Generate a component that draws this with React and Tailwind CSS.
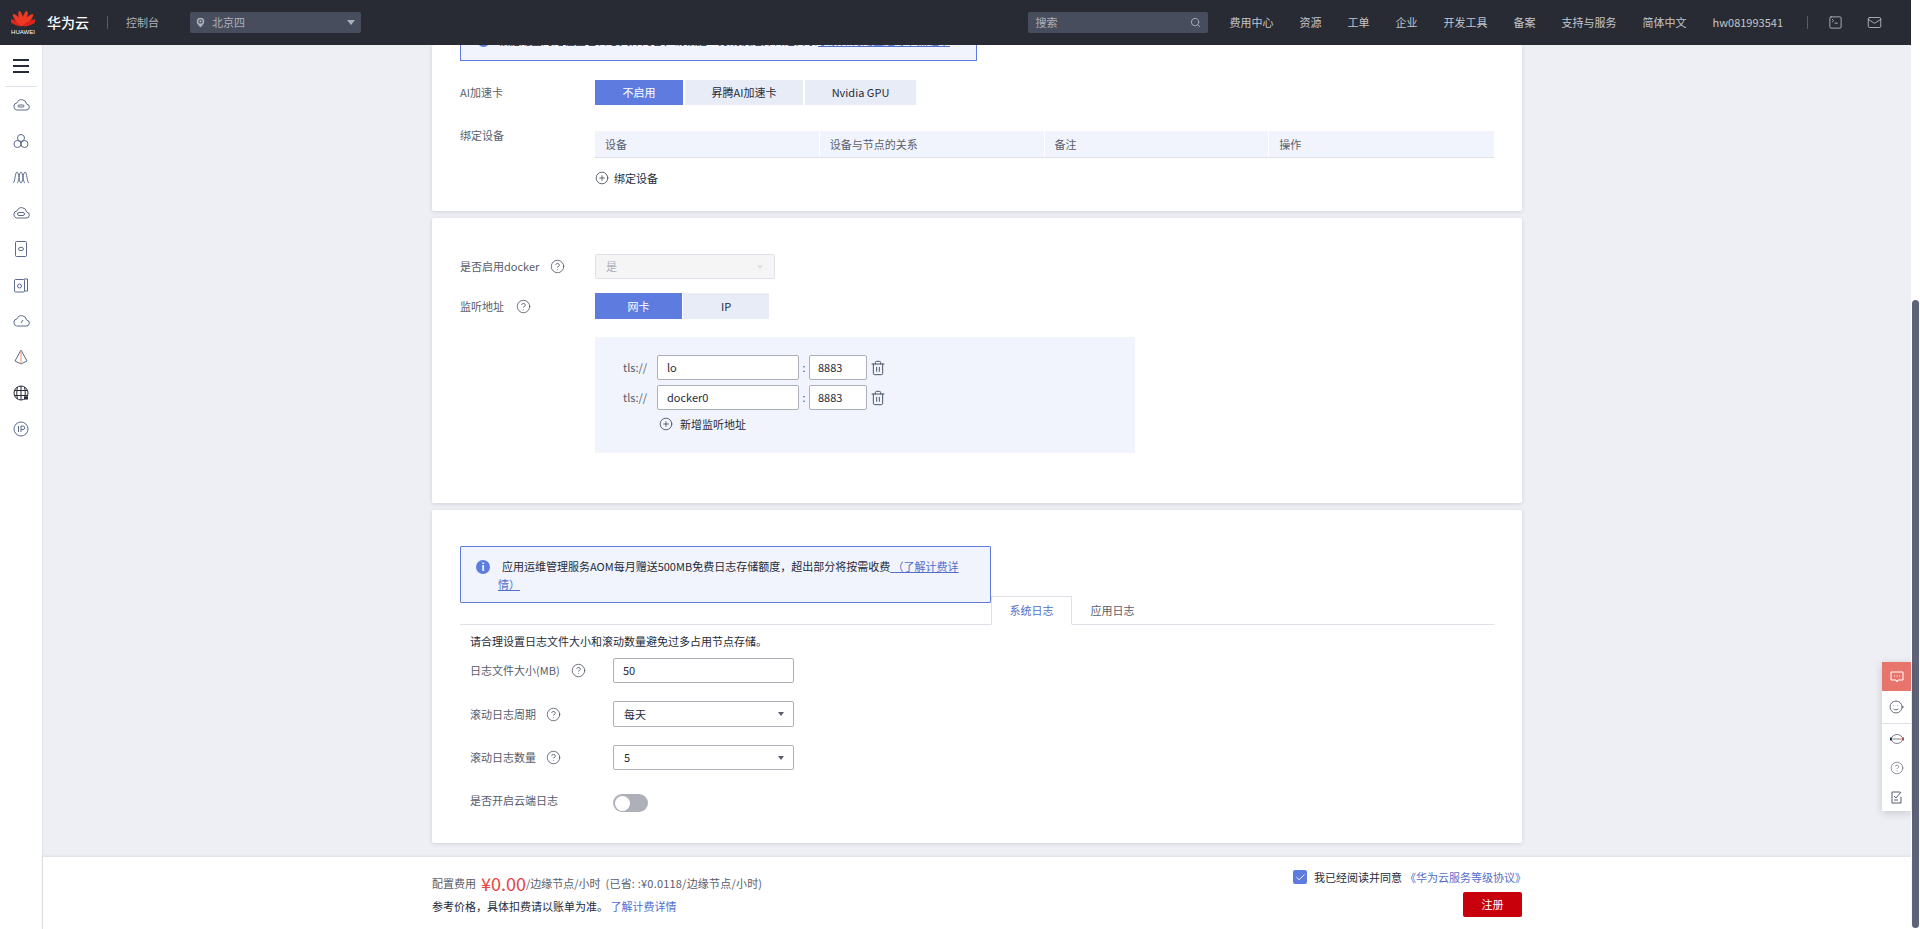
import React from 'react';
import { CircleHelp, CirclePlus, Trash2, Search, MapPin, Mail, SquareTerminal, Check } from 'lucide-react';

const navItems = ['费用中心', '资源', '工单', '企业', '开发工具', '备案', '支持与服务', '简体中文', 'hw081993541'];

function Caret({ className = '' }) {
  return <span className={`w-0 h-0 border-x-[3px] border-x-transparent border-t-[4px] ${className}`} />;
}

function Help() {
  return <CircleHelp className="w-[15px] h-[15px] text-[#4f5666]" strokeWidth={1.3} />;
}

function HuaweiLogo() {
  const petals = [-66, -40, -14, 14, 40, 66];
  return (
    <div className="flex flex-col items-center w-[24px]">
      <svg width="24" height="18" viewBox="-12 -18 24 18">
        {petals.map(a => (
          <ellipse key={a} cx="0" cy="-9" rx="2.2" ry="7.5" fill={Math.abs(a) > 50 ? '#d8261c' : '#ee3a24'} transform={`rotate(${a} 0 -1)`} />
        ))}
      </svg>
      <span className="text-[6px] leading-[8px] text-white font-['Liberation_Sans'] mt-px">HUAWEI</span>
    </div>
  );
}

function SideIcon({ children }) {
  return (
    <div className="h-[36px] flex items-center justify-center">
      <svg width="18" height="18" viewBox="0 0 18 18" fill="none" stroke="#5b6a8c" strokeWidth="1">
        {children}
      </svg>
    </div>
  );
}

const cloud = 'M4.5 14h9.5a3 3 0 0 0 .6-6 5 5 0 0 0-9.6-1.2A3.7 3.7 0 0 0 4.5 14z';

function Sidebar() {
  return (
    <aside className="w-[43px] shrink-0 bg-white border-r border-[#dfe1e8] flex flex-col items-center">
      <div className="w-full h-[41px] flex items-center justify-center">
        <div className="w-[16px] flex flex-col gap-[4px]">
          <span className="h-[2px] bg-[#252b3a]" />
          <span className="h-[2px] bg-[#252b3a]" />
          <span className="h-[2px] bg-[#252b3a]" />
        </div>
      </div>
      <div className="w-[32px] h-px bg-[#dfe1e8]" />
      <SideIcon><path d={cloud} /><rect x="6" y="9" width="6" height="2" rx="1" /></SideIcon>
      <SideIcon><circle cx="9" cy="6" r="3.5" /><circle cx="5.5" cy="12" r="3.5" /><circle cx="12.5" cy="12" r="3.5" /></SideIcon>
      <SideIcon><path d="M1 15C3 15 3 4 5 4S7 15 9 15M5 15C7 15 7 4 9 4S11 15 13 15M9 15C11 15 11 4 13 4S15 15 17 15" /></SideIcon>
      <SideIcon><path d={cloud} /><rect x="5.5" y="8.5" width="7" height="3" rx="1.5" /></SideIcon>
      <SideIcon><rect x="3.5" y="1.5" width="11" height="15" rx="1" /><ellipse cx="9" cy="9" rx="2.5" ry="1.7" /></SideIcon>
      <SideIcon><path d="M12 3h3.5v12H13" /><rect x="2.5" y="3.5" width="10" height="12.5" rx="1" /><circle cx="7.5" cy="10" r="2" /></SideIcon>
      <SideIcon><path d={cloud} /><path d="M9 11l2-3" /></SideIcon>
      <SideIcon><path d="M9 2L3 13l6 3 6-3z" /><path d="M9 2v14" stroke="#e8956b" /></SideIcon>
      <SideIcon><circle cx="9" cy="9" r="7" stroke="#252b3a" /><path d="M2 6.5h14M2 11.5h14M9 2v14M5.500 3c-1 4-1 8 0 12M12.500 3c1 4 1 8 0 12" stroke="#252b3a" /><rect x="12" y="12.500" width="4" height="3" fill="#252b3a" stroke="none" /></SideIcon>
      <SideIcon><circle cx="9" cy="9" r="7" /><path d="M6.500 6v6M9 12V6h2a1.500 1.500 0 0 1 0 3.500H9" /></SideIcon>
    </aside>
  );
}

function Segmented({ items, widths }) {
  return (
    <div className="flex gap-[2px]">
      {items.map((t, i) => (
        <div key={t} className={`h-[25px] flex items-center justify-center text-[11px] ${widths[i]} ${i === 0 ? 'bg-[#5e7ce0] text-white' : 'bg-[#e8ecf7] text-[#252b3a]'}`}>
          {t}
        </div>
      ))}
    </div>
  );
}

function Card({ className = '', children }) {
  return <section className={`bg-white rounded-[2px] shadow-[0_1px_4px_rgba(37,43,58,0.14)] ${className}`}>{children}</section>;
}

function Input({ value, className = '' }) {
  return <div className={`h-[25px] border border-[#adb0b8] rounded-[2px] bg-white flex items-center text-[11px] text-[#252b3a] ${className}`}>{value}</div>;
}

function Select({ value, className = 'h-[25px]' }) {
  return (
    <div className={`w-[181px] border border-[#adb0b8] rounded-[2px] bg-white flex items-center justify-between pl-[10px] pr-[9px] text-[11px] text-[#252b3a] ${className}`}>
      {value}
      <Caret className="border-t-[#575d6c]" />
    </div>
  );
}

function ListenRow({ name }) {
  return (
    <div className="flex items-center h-[25px]">
      <span className="w-[62px] pl-[28px] text-[11px] text-[#575d6c]">tls://</span>
      <Input value={name} className="w-[142px] pl-[9px]" />
      <span className="w-[10px] text-center text-[11px] text-[#575d6c]">:</span>
      <Input value="8883" className="w-[58px] pl-[8px]" />
      <Trash2 className="w-[16px] h-[16px] ml-[3px] text-[#4f5666]" strokeWidth={1.5} />
    </div>
  );
}

function LogRow({ label, gap = 'gap-[10px]', children, className = '' }) {
  return (
    <div className={`flex items-center ${className}`}>
      <div className={`w-[153px] pl-[10px] flex items-center text-[11px] text-[#575d6c] ${gap}`}>
        <span>{label}</span>
        <Help />
      </div>
      {children}
    </div>
  );
}

export default function App() {
  return (
    <div className="relative h-[929px] w-[1920px] overflow-hidden flex flex-col bg-white font-['Noto_Sans_CJK_SC','Noto_Sans',sans-serif]">
      <header className="relative z-10 h-[45px] shrink-0 bg-[#282b33] flex items-center pl-[11px] pr-[29px] mr-[9px]">
        <HuaweiLogo />
        <span className="ml-[12px] text-[14px] font-medium text-white">华为云</span>
        <span className="ml-[18px] w-px h-[13px] bg-[#575d6c]" />
        <span className="ml-[18px] text-[11px] text-[#adb0b8]">控制台</span>
        <div className="ml-[31px] w-[171px] h-[21px] rounded-[2px] bg-[#474d5c] flex items-center pl-[4px] pr-[6px] text-[11px] text-[#adb0b8]">
          <MapPin className="w-[13px] h-[13px] fill-[#adb0b8] text-[#474d5c]" />
          <span className="ml-[5px] flex-1">北京四</span>
          <Caret className="border-t-[#adb0b8] border-x-[4px] border-t-[5px]" />
        </div>
        <div className="ml-auto w-[180px] h-[21px] rounded-[2px] bg-[#474d5c] flex items-center justify-between pl-[8px] pr-[7px] text-[11px] text-[#adb0b8]">
          搜索
          <Search className="w-[11px] h-[11px]" />
        </div>
        <nav className="ml-[22px] flex items-center gap-[26px] text-[11px] text-[#c3c6cd]">
          {navItems.map(t => <span key={t}>{t}</span>)}
        </nav>
        <span className="ml-[24px] w-px h-[13px] bg-[#575d6c]" />
        <SquareTerminal className="ml-[20px] w-[15px] h-[15px] text-[#c3c6cd]" strokeWidth={1.3} />
        <Mail className="ml-[24px] w-[15px] h-[15px] text-[#c3c6cd]" strokeWidth={1.3} />
      </header>

      <div className="flex-1 min-h-0 flex mr-[9px] bg-[#eeeff4]">
        <Sidebar />
        <div className="flex-1 min-w-0 flex flex-col">
          <main className="flex-1 min-h-0 overflow-hidden pl-[389px]">
            <div className="w-[1090px] flex flex-col gap-[7px]">
              <Card className="h-[166px] px-[28px]">
                {/* scrolled under the header, only the lower edge of this notice shows */}
                <div className="-mt-[30px] h-[46px] w-[517px] border border-[#5e7ce0] bg-[#f1f4fc] pl-[16px] pt-[16px] flex items-start gap-[8px] text-[11px] text-[#252b3a]">
                  <span className="mt-[2px] w-[13px] h-[13px] shrink-0 rounded-full bg-[#5e7ce0]" />
                  <span>根据配置的路径查看日志文件内容，请根据业务规模选择合适目录<a className="ml-[1px] text-[#526ecc] underline">了解如何配置边缘节点证书</a></span>
                </div>
                <div className="mt-[19px] flex">
                  <span className="w-[135px] leading-[25px] text-[11px] text-[#575d6c]">AI加速卡</span>
                  <Segmented items={['不启用', '昇腾AI加速卡', 'Nvidia GPU']} widths={['w-[88px]', 'w-[118px]', 'w-[111px]']} />
                </div>
                <div className="mt-[22px] flex">
                  <span className="w-[135px] text-[11px] text-[#575d6c]">绑定设备</span>
                  <div className="flex-1 mt-[4px]">
                    <div className="h-[27px] grid grid-cols-4 bg-[#f1f4fc] border-b border-[#dfe1e8] text-[11px] text-[#575d6c] divide-x divide-white">
                      {['设备', '设备与节点的关系', '备注', '操作'].map(t => (
                        <span key={t} className="pl-[10px] leading-[26px]">{t}</span>
                      ))}
                    </div>
                    <div className="mt-[13px] flex items-center gap-[5px] h-[14px] text-[11px] text-[#252b3a]">
                      <CirclePlus className="w-[14px] h-[14px] text-[#252b3a]" strokeWidth={1.2} />
                      绑定设备
                    </div>
                  </div>
                </div>
              </Card>

              <Card className="h-[285px] px-[28px] pt-[36px]">
                <div className="flex items-center">
                  <div className="w-[135px] flex items-center gap-[11px] text-[11px] text-[#575d6c]">是否启用docker <Help /></div>
                  <div className="w-[180px] h-[25px] border border-[#dfe1e8] rounded-[2px] bg-[#f5f5f6] flex items-center justify-between pl-[10px] pr-[11px] text-[11px] text-[#adb0b8]">
                    是
                    <Caret className="border-t-[#dfe1e8]" />
                  </div>
                </div>
                <div className="mt-[14px] flex items-center">
                  <div className="w-[135px] flex items-center gap-[12px] text-[11px] text-[#575d6c]">监听地址 <Help /></div>
                  <div className="flex">
                    <div className="w-[87px] h-[26px] bg-[#5e7ce0] text-white text-[11px] flex items-center justify-center">网卡</div>
                    <div className="w-[86px] h-[26px] ml-px bg-[#e8ecf7] text-[#252b3a] text-[11px] flex items-center justify-center">IP</div>
                  </div>
                </div>
                <div className="mt-[18px] ml-[135px] w-[540px] h-[116px] bg-[#f1f4fc] pt-[18px]">
                  <div className="flex flex-col gap-[5px]">
                    <ListenRow name="lo" />
                    <ListenRow name="docker0" />
                  </div>
                  <div className="mt-[7px] ml-[64px] h-[14px] flex items-center gap-[7px] text-[11px] text-[#252b3a]">
                    <CirclePlus className="w-[14px] h-[14px]" strokeWidth={1.2} />
                    新增监听地址
                  </div>
                </div>
              </Card>

              <Card className="h-[333px] px-[28px] pt-[36px]">
                <div className="relative z-[1] w-[531px] h-[57px] border border-[#5e7ce0] rounded-[1px] bg-[#f1f4fc] pl-[15px] pr-[30px] pt-[10px] text-[11px] leading-[18px] text-[#252b3a] flex items-start gap-[8px]">
                  <span className="mt-[3px] w-[14px] h-[14px] shrink-0 rounded-full bg-[#5e7ce0] text-white text-[10px] font-bold leading-[14px] text-center">i</span>
                  <p className="indent-[4px]">
                    应用运维管理服务AOM每月赠送500MB免费日志存储额度，超出部分将按需收费
                    <a className="text-[#526ecc] underline"> （了解计费详情）</a>
                  </p>
                </div>
                <div className="-mt-[7px] flex items-end border-b border-[#dfe1e8] h-[29px]">
                  <div className="ml-[531px] w-[81px] h-[29px] -mb-px bg-white border border-b-white border-[#dfe1e8] flex items-center justify-center text-[11px] text-[#526ecc]">系统日志</div>
                  <div className="w-[81px] h-[28px] flex items-center justify-center text-[11px] text-[#575d6c]">应用日志</div>
                </div>
                <p className="mt-[8px] pl-[10px] text-[11px] leading-[16px] text-[#252b3a]">请合理设置日志文件大小和滚动数量避免过多占用节点存储。</p>
                <div className="mt-[9px] flex flex-col">
                  <LogRow label="日志文件大小(MB)" gap="gap-[11px]"><Input value="50" className="w-[181px] pl-[9px]" /></LogRow>
                  <LogRow label="滚动日志周期" className="mt-[18px]"><Select value="每天" className="h-[26px]" /></LogRow>
                  <LogRow label="滚动日志数量" className="mt-[18px]"><Select value="5" /></LogRow>
                  <div className="mt-[24px] flex items-start">
                    <span className="w-[153px] pl-[10px] -mt-[2px] text-[11px] text-[#575d6c]">是否开启云端日志</span>
                    <div className="w-[35px] h-[18px] rounded-full bg-[#adb0b8] pl-[2px] flex items-center">
                      <span className="w-[15px] h-[15px] rounded-full bg-white" />
                    </div>
                  </div>
                </div>
              </Card>
            </div>
          </main>

          <footer className="h-[72px] shrink-0 bg-white pl-[389px] pr-[389px] flex justify-between shadow-[0_-1px_3px_rgba(37,43,58,0.08)]">
            <div className="pt-[14px] text-[11px] text-[#575d6c]">
              <div className="flex items-center h-[24px] whitespace-pre">
                配置费用
                <span className="ml-[5px] text-[18px] text-[#e54545]">¥0.00</span>
                /边缘节点/小时  <span className="tracking-[0.2px]">(已省: :¥0.0118/边缘节点/小时)</span>
              </div>
              <div className="mt-[3px] text-[#252b3a]">参考价格，具体扣费请以账单为准。 <a className="text-[#526ecc]">了解计费详情</a></div>
            </div>
            <div className="pt-[12px] flex flex-col items-end">
              <div className="-mr-[4px] flex items-center h-[16px] text-[11px] text-[#252b3a]">
                <span className="w-[14px] h-[14px] rounded-[2px] bg-[#5e7ce0] flex items-center justify-center mr-[7px]">
                  <Check className="w-[11px] h-[11px] text-white" strokeWidth={2} />
                </span>
                我已经阅读并同意
                <a className="ml-[3px] text-[#526ecc]">《华为云服务等级协议》</a>
              </div>
              <button className="mt-[7px] w-[59px] h-[25px] bg-[#c7000b] rounded-[2px] text-white text-[11px]">注册</button>
            </div>
          </footer>
        </div>
      </div>

      {/* page scrollbar */}
      <div className="absolute right-[1px] top-[300px] w-[7px] h-[628px] rounded-full bg-[#5f6378]" />

      {/* floating help rail */}
      <div className="absolute right-[9px] top-[662px] w-[29px] bg-white shadow-[0_2px_8px_rgba(37,43,58,0.2)] flex flex-col items-center">
        <div className="w-full h-[29px] bg-[#e8756b] flex items-center justify-center">
          <svg width="14" height="14" viewBox="0 0 14 14" fill="none" stroke="#fff"><path d="M1 2h12v8H8l-1 2-1-2H1z" /><path d="M4 6h1M6.500 6h1M9 6h1" /></svg>
        </div>
        <div className="w-full h-[33px] flex items-center justify-center border-b border-[#dfe1e8]">
          <svg width="15" height="14" viewBox="0 0 15 14" fill="none" stroke="#575d6c" strokeWidth="0.9"><circle cx="7" cy="7" r="6" /><path d="M4.500 5.500h.6M8.500 5.500h.6M4.500 9c1.200 1 3.500 1 5 0M13 6l1.500 1-1.500 1" /></svg>
        </div>
        <div className="w-full h-[29px] flex items-center justify-center">
          <svg width="16" height="12" viewBox="0 0 16 12" fill="none" stroke="#6b7385" strokeWidth="0.9"><ellipse cx="8" cy="6" rx="5.500" ry="4.500" /><path d="M3.500 6h9" /><rect x="1" y="4.500" width="1.800" height="3" fill="#252b3a" stroke="none" /><rect x="13.200" y="4.500" width="1.800" height="3" fill="#c7402c" stroke="none" /></svg>
        </div>
        <div className="w-full h-[29px] flex items-center justify-center">
          <CircleHelp className="w-[14px] h-[14px] text-[#575d6c]" strokeWidth={1.1} />
        </div>
        <div className="w-full h-[29px] flex items-center justify-center">
          <svg width="14" height="14" viewBox="0 0 14 14" fill="none" stroke="#575d6c"><path d="M11 7v6H2V2h8M4 6l2 2 5-6M4 10h4" /></svg>
        </div>
      </div>
    </div>
  );
}
